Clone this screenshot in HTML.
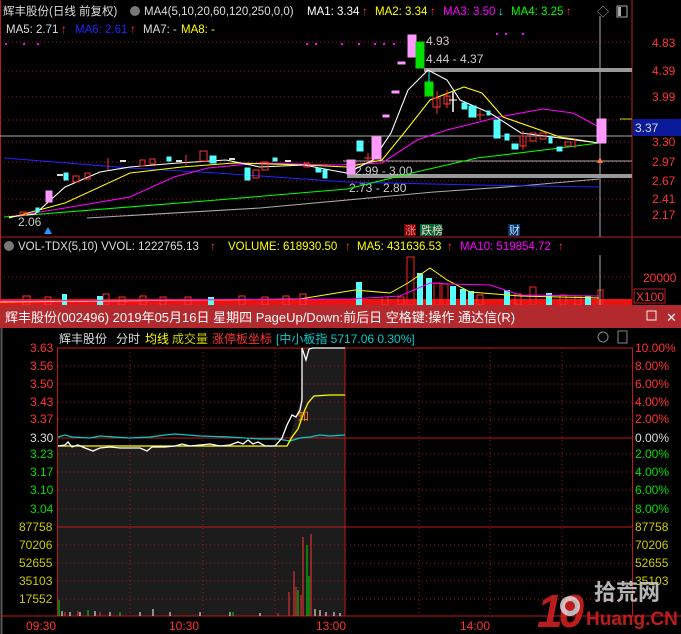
<!DOCTYPE html>
<html><head><meta charset="utf-8"><style>
body{margin:0;background:#000;width:681px;height:634px;overflow:hidden;font-family:"Liberation Sans","Noto Sans CJK SC",sans-serif}
svg{display:block}
text{font-family:"Liberation Sans","Noto Sans CJK SC",sans-serif}
</style></head><body>
<svg width="681" height="634" viewBox="0 0 681 634" xmlns="http://www.w3.org/2000/svg">
<rect width="681" height="634" fill="#000"/>
<line x1="632" y1="0" x2="632" y2="305" stroke="#b02020"/>
<line x1="0" y1="237" x2="681" y2="237" stroke="#b02020"/>
<line x1="0.5" y1="0" x2="0.5" y2="305" stroke="#b02020"/>
<g font-size="11.5">
<text x="3" y="15" fill="#ddd">辉丰股份(日线 前复权)</text>
<circle cx="135" cy="11" r="5" fill="#777"/>
<text x="144" y="15" fill="#ddd">MA4(5,10,20,60,120,250,0,0)</text>
<text x="307" y="15" fill="#fff">MA1: 3.34</text><text x="362" y="15" fill="#f33">↑</text>
<text x="375" y="15" fill="#ff0">MA2: 3.34</text><text x="430" y="15" fill="#f33">↑</text>
<text x="443" y="15" fill="#f0f">MA3: 3.50</text><text x="498" y="15" fill="#0ff">↓</text>
<text x="511" y="15" fill="#0f0">MA4: 3.25</text><text x="566" y="15" fill="#f33">↑</text>
<text x="6" y="33" fill="#ddd">MA5: 2.71</text><text x="61" y="33" fill="#f33">↑</text>
<text x="75" y="33" fill="#22f">MA6: 2.61</text><text x="130" y="33" fill="#f33">↑</text>
<text x="143" y="33" fill="#ddd">MA7: -</text><text x="181" y="33" fill="#ff0">MA8: -</text>
</g>
<text x="597" y="16" fill="#aaa" font-size="12">◇</text>
<rect x="617" y="6" width="10" height="11" fill="none" stroke="#aaa"/><rect x="618" y="7" width="3" height="9" fill="#aaa"/>
<g fill="#f0f">
<rect x="5" y="43" width="2" height="2"/><rect x="23" y="43" width="2" height="2"/><rect x="37" y="43" width="2" height="2"/>
<rect x="306" y="43" width="2" height="2"/><rect x="315" y="43" width="2" height="2"/><rect x="341" y="43" width="2" height="2"/>
<rect x="358" y="43" width="2" height="2"/><rect x="374" y="43" width="2" height="2"/><rect x="383" y="43" width="2" height="2"/>
<rect x="393" y="43" width="2" height="2"/><rect x="496" y="33" width="2" height="2"/><rect x="505" y="33" width="2" height="2"/><rect x="522" y="33" width="2" height="2"/>
</g>
<g stroke="#a01818" stroke-dasharray="1,3">
<line x1="0" y1="42" x2="632" y2="42"/><line x1="0" y1="71" x2="632" y2="71"/><line x1="0" y1="97" x2="632" y2="97"/>
<line x1="0" y1="120" x2="632" y2="120"/><line x1="0" y1="142" x2="632" y2="142"/><line x1="0" y1="162" x2="632" y2="162"/>
<line x1="0" y1="181" x2="632" y2="181"/><line x1="0" y1="199" x2="632" y2="199"/><line x1="0" y1="215" x2="632" y2="215"/>
<line x1="0" y1="277" x2="632" y2="277"/>
</g>
<g fill="#f33" font-size="12">
<text x="652" y="47">4.83</text><text x="652" y="75">4.39</text><text x="652" y="101">3.99</text>
<text x="652" y="146">3.30</text><text x="652" y="166">2.97</text><text x="652" y="185">2.67</text>
<text x="652" y="203">2.41</text><text x="652" y="219">2.17</text>
</g>
<rect x="633" y="119" width="48" height="17" fill="#0b1a9a"/>
<text x="635" y="132" fill="#ddd" font-size="12">3.37</text>
<line x1="620" y1="119" x2="632" y2="119" stroke="#cc0"/>
<line x1="0" y1="136" x2="632" y2="136" stroke="#aaa"/>
<line x1="343" y1="161" x2="632" y2="161" stroke="#aaa"/>
<line x1="600" y1="16" x2="600" y2="237" stroke="#aaa"/>
<rect x="424" y="68" width="208" height="4" fill="#999"/>
<rect x="347" y="174" width="285" height="4" fill="#999"/>
<g fill="#ccc" font-size="12">
<text x="426" y="45">4.93</text><text x="426" y="63">4.44 - 4.37</text>
<text x="355" y="175">2.99 - 3.00</text><text x="349" y="192">2.73 - 2.80</text>
<text x="18" y="226">2.06</text>
</g>
<g fill="none" stroke-width="1.1">
<polyline stroke="#aaa" points="87,218 260,208 434,192 520,186 599,179"/>
<polyline stroke="#22f" points="4,158 130,168 217,173 347,182 477,185 599,187"/>
<polyline stroke="#0f0" points="4,217 217,200 347,189 412,173 477,158 560,148 599,143"/>
<polyline stroke="#f0f" points="9,217 65,208 130,197 174,177 208,168 260,163 338,165 382,163 417,140 447,130 499,117 543,109 573,113 599,127"/>
<polyline stroke="#ff0" points="9,218 65,203 130,173 182,167 234,163 304,165 347,167 382,160 404,133 430,100 464,87 482,93 503,117 560,137 599,143"/>
<polyline stroke="#fff" points="9,217 35,214 65,187 100,172 130,167 178,163 226,160 260,167 304,165 330,170 347,173 373,160 391,133 408,90 428,70 447,80 460,100 490,113 521,133 560,138 599,143"/>
</g>
<g stroke-width="1">
<g fill="#f9f" stroke="#f9f">
<rect x="347" y="160" width="8" height="14"/><rect x="372" y="137" width="9" height="22"/>
<rect x="408" y="35" width="8" height="22"/><rect x="597" y="119" width="9" height="24"/>
<rect x="46" y="191" width="6" height="11"/>
<rect x="398" y="62" width="7" height="2"/><rect x="392" y="91" width="7" height="2"/><rect x="383" y="115" width="6" height="2"/>
</g>
<g fill="#0d0" stroke="#0d0"><rect x="416" y="42" width="8" height="26"/><rect x="425" y="82" width="8" height="14"/></g>
<line x1="429" y1="72" x2="429" y2="82" stroke="#0ff"/>
<g fill="#5ff" stroke="#5ff">
<rect x="357" y="141" width="6" height="10"/><rect x="462" y="103" width="5" height="6"/><rect x="469" y="106" width="7" height="11"/>
<rect x="494" y="120" width="6" height="18"/><rect x="505" y="134" width="4" height="6"/><rect x="512" y="144" width="6" height="5"/>
<rect x="549" y="137" width="3" height="6"/><rect x="557" y="147" width="5" height="4"/><rect x="487" y="111" width="3" height="4"/>
<rect x="64" y="173" width="4" height="7"/><rect x="245" y="168" width="5" height="12"/><rect x="323" y="170" width="4" height="8"/>
<rect x="167" y="157" width="4" height="4"/><rect x="210" y="156" width="6" height="7"/><rect x="273" y="158" width="4" height="3"/>
<rect x="316" y="168" width="5" height="4"/><rect x="36" y="208" width="3" height="4"/>
</g>
<g fill="none" stroke="#f33">
<rect x="433" y="98" width="7" height="9"/><rect x="444" y="96" width="6" height="8"/><rect x="520" y="136" width="6" height="10"/>
<rect x="530" y="133" width="6" height="8"/><rect x="540" y="133" width="6" height="6"/><rect x="565" y="142" width="6" height="4"/>
<rect x="73" y="176" width="6" height="6"/><rect x="85" y="173" width="5" height="6"/><rect x="140" y="160" width="5" height="6"/>
<rect x="150" y="159" width="5" height="5"/><rect x="200" y="151" width="7" height="10"/><rect x="253" y="170" width="6" height="8"/>
<rect x="262" y="162" width="6" height="8"/><rect x="304" y="163" width="5" height="4"/><rect x="20" y="212" width="6" height="3"/>
<line x1="437" y1="91" x2="437" y2="114"/><line x1="447" y1="90" x2="447" y2="108"/><line x1="523" y1="131" x2="523" y2="150"/>
<line x1="480" y1="110" x2="480" y2="120"/><line x1="476" y1="115" x2="485" y2="115"/><line x1="368" y1="153" x2="368" y2="162"/><line x1="364" y1="158" x2="372" y2="158"/>
<line x1="575" y1="138" x2="575" y2="148"/><line x1="108" y1="158" x2="108" y2="170"/><line x1="186" y1="155" x2="186" y2="165"/>
</g>
<line x1="453" y1="92" x2="453" y2="112" stroke="#fff" stroke-width="1.5"/><line x1="449" y1="100" x2="457" y2="100" stroke="#fff"/>
<g fill="#ddd"><rect x="120" y="160" width="6" height="2"/><rect x="176" y="160" width="6" height="2"/><rect x="229" y="158" width="6" height="2"/><rect x="285" y="160" width="6" height="2"/><rect x="57" y="174" width="6" height="2"/></g>
</g>
<path d="M597,163 L600,157 L603,163 Z" fill="#f73"/>
<path d="M44,234 L48,227 L52,234 Z" fill="#29f"/>
<rect x="404" y="224" width="12" height="12" fill="#700"/><text x="405" y="234" fill="#f88" font-size="11">涨</text>
<rect x="420" y="224" width="22" height="12" fill="#063"/><text x="421" y="234" fill="#fcc" font-size="11">跌榜</text>
<rect x="508" y="224" width="12" height="12" fill="#036"/><text x="509" y="234" fill="#cdf" font-size="11">财</text>
<g font-size="11.5">
<circle cx="9" cy="246" r="5" fill="#777"/>
<text x="18" y="250" fill="#ddd">VOL-TDX(5,10) VVOL: 1222765.13</text><text x="210" y="250" fill="#f33">↑</text>
<text x="228" y="250" fill="#ff0">VOLUME: 618930.50</text><text x="345" y="250" fill="#f33">↑</text>
<text x="357" y="250" fill="#ff0">MA5: 431636.53</text><text x="447" y="250" fill="#f33">↑</text>
<text x="460" y="250" fill="#f0f">MA10: 519854.72</text><text x="558" y="250" fill="#f33">↑</text>
</g>
<text x="643" y="282" fill="#f33" font-size="12">20000</text>
<rect x="634" y="289" width="31" height="14" fill="none" stroke="#b02020"/><text x="636" y="301" fill="#f33" font-size="12">X100</text>
<g>
<rect x="0" y="299" width="632" height="6" fill="#e11"/>
<g fill="none" stroke="#f33">
<rect x="23" y="296" width="7" height="9"/><rect x="45" y="297" width="6" height="8"/><rect x="103" y="294" width="6" height="11"/><rect x="119" y="297" width="6" height="8"/><rect x="140" y="296" width="6" height="9"/><rect x="160" y="297" width="6" height="8"/><rect x="185" y="297" width="6" height="8"/><rect x="239" y="296" width="6" height="9"/><rect x="262" y="297" width="6" height="8"/><rect x="283" y="296" width="6" height="9"/><rect x="300" y="294" width="6" height="11"/><rect x="382" y="297" width="6" height="8"/><rect x="398" y="297" width="6" height="8"/><rect x="477" y="295" width="6" height="10"/><rect x="515" y="294" width="6" height="11"/><rect x="560" y="295" width="6" height="10"/><rect x="575" y="296" width="6" height="9"/>
</g>
<g fill="#5ff"><rect x="62" y="294" width="5" height="11"/><rect x="97" y="296" width="6" height="9"/><rect x="208" y="297" width="6" height="8"/><rect x="356" y="282" width="6" height="23"/><rect x="417" y="273" width="6" height="32"/><rect x="426" y="278" width="6" height="27"/><rect x="450" y="286" width="6" height="19"/><rect x="460" y="289" width="6" height="16"/><rect x="468" y="291" width="6" height="14"/><rect x="504" y="290" width="6" height="15"/><rect x="546" y="293" width="6" height="12"/><rect x="585" y="296" width="6" height="9"/></g>
<g fill="none" stroke="#f22"><rect x="407" y="257" width="7" height="48"/><rect x="434" y="283" width="6" height="22"/><rect x="442" y="284" width="6" height="21"/><rect x="530" y="287" width="6" height="18"/><rect x="598" y="290" width="5" height="15"/></g>
<line x1="600" y1="255" x2="600" y2="305" stroke="#aaa"/>
<polyline fill="none" stroke="#ff0" points="0,302 300,299 355,290 390,293 408,283 430,268 447,280 470,292 520,296 599,298"/>
<polyline fill="none" stroke="#f0f" points="0,301 350,299 400,296 430,283 450,284 490,285 520,295 599,296"/>
</g>
<rect x="0" y="305" width="681" height="23" fill="#b22a2e"/>
<text x="5" y="322" fill="#fff" font-size="13">辉丰股份(002496) 2019年05月16日 星期四 PageUp/Down:前后日 空格键:操作 通达信(R)</text>
<rect x="647" y="311" width="9" height="9" fill="none" stroke="#eee"/>
<text x="666" y="322" fill="#eee" font-size="13">✕</text>
<rect x="0.5" y="328" width="2" height="306" fill="#555"/>
<g font-size="12">
<text x="59" y="343" fill="#ddd">辉丰股份</text><text x="116" y="343" fill="#ddd">分时</text>
<text x="145" y="343" fill="#ff0">均线</text><text x="172" y="343" fill="#cc0">成交量</text>
<text x="212" y="343" fill="#f33">涨停板坐标</text><text x="276" y="343" fill="#0cc">[中小板指 5717.06 0.30%]</text>
</g>
<circle cx="603" cy="337" r="5" fill="none" stroke="#888"/><rect x="618" y="331" width="9" height="12" fill="none" stroke="#888"/>
<path d="M58,446 L59,446 L90,447 L275,446 L287,446 L295,420 L301,397 L302,348 L345,348 L345,616 L58,616 Z" fill="#1c1c1c"/>
<g stroke="#a01818" stroke-dasharray="1,3">
<line x1="58" y1="366" x2="632" y2="366"/><line x1="58" y1="384" x2="632" y2="384"/><line x1="58" y1="402" x2="632" y2="402"/>
<line x1="58" y1="419" x2="632" y2="419"/><line x1="58" y1="454" x2="632" y2="454"/><line x1="58" y1="472" x2="632" y2="472"/>
<line x1="58" y1="490" x2="632" y2="490"/><line x1="58" y1="509" x2="632" y2="509"/>
<line x1="58" y1="545" x2="632" y2="545"/><line x1="58" y1="563" x2="632" y2="563"/><line x1="58" y1="581" x2="632" y2="581"/><line x1="58" y1="599" x2="632" y2="599"/>
<line x1="130" y1="348" x2="130" y2="616"/><line x1="203" y1="348" x2="203" y2="616"/><line x1="275" y1="348" x2="275" y2="616"/>
<line x1="419" y1="348" x2="419" y2="616"/><line x1="490" y1="348" x2="490" y2="616"/><line x1="562" y1="348" x2="562" y2="616"/>
</g>
<g stroke="#c01818" fill="none">
<rect x="57.5" y="348" width="575" height="268"/>
<line x1="58" y1="438" x2="632" y2="438"/><line x1="58" y1="527" x2="632" y2="527"/>
<line x1="345" y1="348" x2="345" y2="616"/><line x1="0" y1="616" x2="681" y2="616"/>
</g>
<g font-size="12">
<g fill="#f33"><text x="30" y="352">3.63</text><text x="30" y="370">3.56</text><text x="30" y="388">3.50</text><text x="30" y="406">3.43</text><text x="30" y="423">3.37</text></g>
<text x="30" y="442" fill="#ddd">3.30</text>
<g fill="#0d0"><text x="30" y="458">3.23</text><text x="30" y="476">3.17</text><text x="30" y="494">3.10</text><text x="30" y="513">3.04</text></g>
<g fill="#cc0"><text x="19" y="531">87758</text><text x="19" y="549">70206</text><text x="19" y="567">52655</text><text x="19" y="585">35103</text><text x="19" y="603">17552</text></g>
<g fill="#f33"><text x="635" y="352">10.00%</text><text x="635" y="370">8.00%</text><text x="635" y="388">6.00%</text><text x="635" y="406">4.00%</text><text x="635" y="423">2.00%</text></g>
<text x="635" y="442" fill="#ddd">0.00%</text>
<g fill="#0d0"><text x="635" y="458">2.00%</text><text x="635" y="476">4.00%</text><text x="635" y="494">6.00%</text><text x="635" y="513">8.00%</text></g>
<g fill="#cc0"><text x="635" y="531">87758</text><text x="635" y="549">70206</text><text x="635" y="567">52655</text><text x="635" y="585">35103</text></g>
<g fill="#f33"><text x="26" y="630">09:30</text><text x="169" y="630">10:30</text><text x="316" y="630">13:00</text><text x="460" y="630">14:00</text></g>
</g>
<polyline fill="none" stroke="#0cc" stroke-width="1.2" points="58,437 65,435 72,437 90,438 100,436 130,438 150,437 165,435 175,434 200,436 230,437 260,439 278,439 290,441 300,438 310,437 320,435 330,436 345,435"/>
<polyline fill="none" stroke="#ff0" stroke-width="1.3" points="58,446 287,446 292,437 298,429 304,412 308,403 314,396 330,395 345,395"/>
<polyline fill="none" stroke="#fff" stroke-width="1.3" points="58,446 65,445 68,442 72,447 78,445 85,448 93,451 100,448 110,447 120,448 140,448 147,451 152,447 165,447 175,446 182,444 190,446 200,445 210,444 220,446 230,445 238,442 243,444 248,440 253,444 258,442 265,446 275,446 282,438 287,425 292,415 296,417 300,410 302,400 302,348 306,360 309,349 313,348 345,348"/>
<g stroke-width="1">
<g stroke="#fff"><line x1="62" y1="611" x2="62" y2="616"/><line x1="70" y1="612" x2="70" y2="616"/><line x1="80" y1="612" x2="80" y2="616"/><line x1="95" y1="611" x2="95" y2="616"/><line x1="110" y1="612" x2="110" y2="616"/><line x1="140" y1="612" x2="140" y2="616"/><line x1="153" y1="609" x2="153" y2="616"/><line x1="170" y1="612" x2="170" y2="616"/><line x1="200" y1="612" x2="200" y2="616"/><line x1="230" y1="612" x2="230" y2="616"/><line x1="260" y1="613" x2="260" y2="616"/><line x1="315" y1="609" x2="315" y2="616"/><line x1="320" y1="610" x2="320" y2="616"/><line x1="326" y1="612" x2="326" y2="616"/><line x1="334" y1="612" x2="334" y2="616"/><line x1="340" y1="613" x2="340" y2="616"/></g>
<g stroke="#0d0"><line x1="59" y1="600" x2="59" y2="616"/><line x1="88" y1="610" x2="88" y2="616"/><line x1="120" y1="612" x2="120" y2="616"/><line x1="233" y1="612" x2="233" y2="616"/><line x1="298" y1="590" x2="298" y2="616"/><line x1="303" y1="588" x2="303" y2="616"/><line x1="307" y1="545" x2="307" y2="616"/><line x1="309" y1="576" x2="309" y2="616"/></g>
<g stroke="#f33"><line x1="65" y1="612" x2="65" y2="616"/><line x1="78" y1="611" x2="78" y2="616"/><line x1="100" y1="612" x2="100" y2="616"/><line x1="278" y1="613" x2="278" y2="616"/><line x1="289" y1="592" x2="289" y2="616"/><line x1="294" y1="571" x2="294" y2="616"/><line x1="296" y1="587" x2="296" y2="616"/><line x1="301" y1="595" x2="301" y2="616"/><line x1="303" y1="537" x2="303" y2="616"/><line x1="311" y1="534" x2="311" y2="616"/></g>
</g>
<text x="298" y="420" fill="#f80" font-size="11">知</text>
<g opacity="0.9">
<text x="537" y="627" fill="#d02020" font-size="46" font-weight="bold" font-style="italic" letter-spacing="-4">10</text>
<circle cx="570" cy="606" r="10" fill="#fff" opacity="0.8"/><circle cx="570" cy="606" r="5" fill="#d02020"/>
<text x="594" y="600" fill="#c9c9c9" font-size="22" font-weight="bold">拾荒网</text>
<text x="586" y="625" fill="#d02020" font-size="19" font-weight="bold">Huang.CN</text>
</g>
</svg>
</body></html>
